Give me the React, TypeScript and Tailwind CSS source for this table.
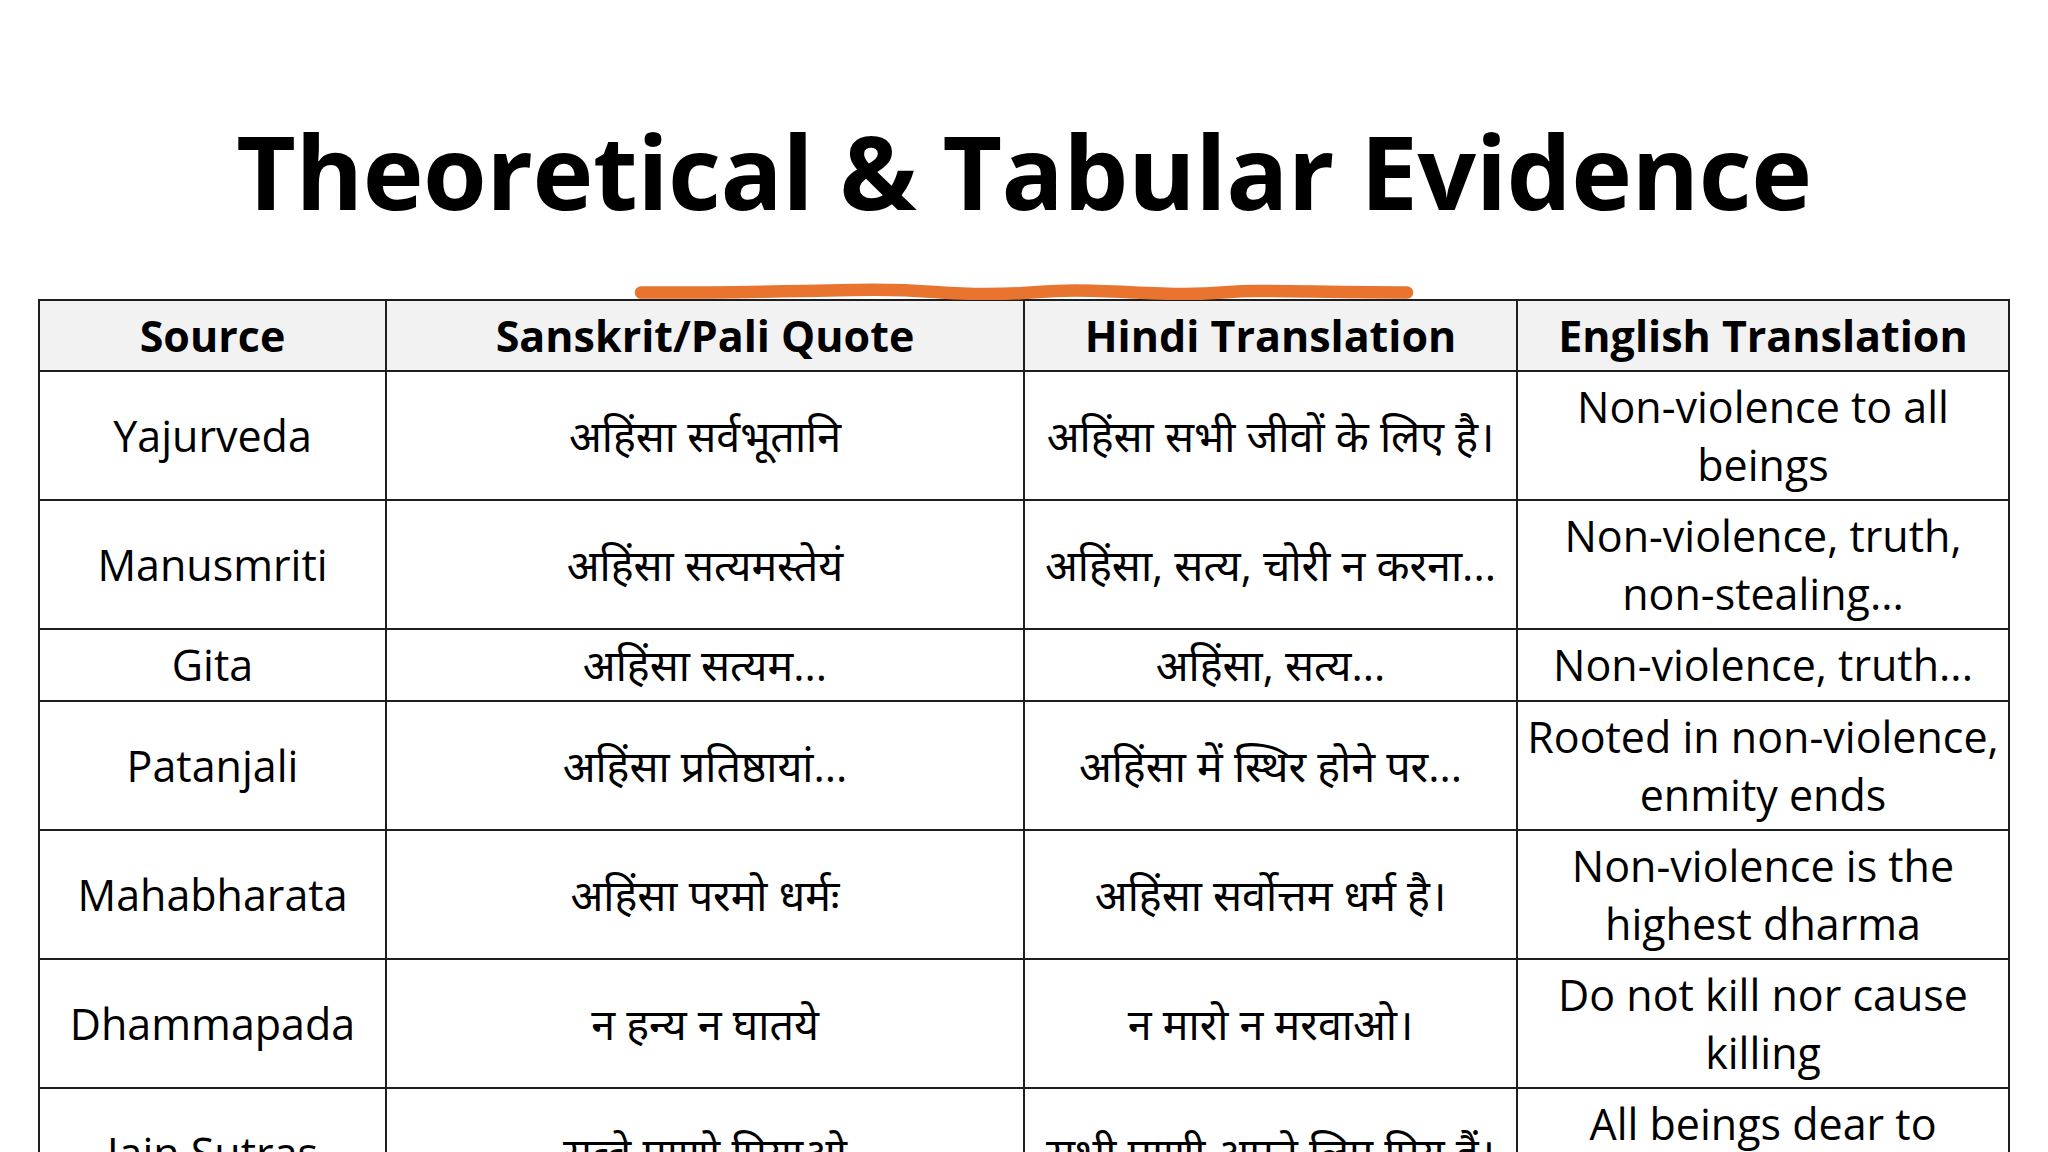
import React from "react";

type Row = {
  source: string;
  quote: string;
  hindi: string;
  english: string[];
  short?: boolean;
};

const rows: Row[] = [
  { source: "Yajurveda", quote: "अहिंसा सर्वभूतानि", hindi: "अहिंसा सभी जीवों के लिए है।", english: ["Non-violence to all", "beings"] },
  { source: "Manusmriti", quote: "अहिंसा सत्यमस्तेयं", hindi: "अहिंसा, सत्य, चोरी न करना...", english: ["Non-violence, truth,", "non-stealing..."] },
  { source: "Gita", quote: "अहिंसा सत्यम...", hindi: "अहिंसा, सत्य...", english: ["Non-violence, truth..."], short: true },
  { source: "Patanjali", quote: "अहिंसा प्रतिष्ठायां...", hindi: "अहिंसा में स्थिर होने पर...", english: ["Rooted in non-violence,", "enmity ends"] },
  { source: "Mahabharata", quote: "अहिंसा परमो धर्मः", hindi: "अहिंसा सर्वोत्तम धर्म है।", english: ["Non-violence is the", "highest dharma"] },
  { source: "Dhammapada", quote: "न हन्य न घातये", hindi: "न मारो न मरवाओ।", english: ["Do not kill nor cause", "killing"] },
  { source: "Jain Sutras", quote: "सव्वे पाणो पियाओ", hindi: "सभी प्राणी अपने लिए प्रिय हैं।", english: ["All beings dear to", "themselves"] },
];

const headers = ["Source", "Sanskrit/Pali Quote", "Hindi Translation", "English Translation"];

// hand-drawn orange underline under the title
function BrushLine() {
  return (
    <svg width="780" height="17" viewBox="0 0 780 17" className="block">
      <path
        d="M7 9.5 C 80 10, 150 8.5, 221 7 S 300 11, 352 11 S 402 7.5, 441 7.5 S 512 11, 551 11 S 592 8, 622 8 S 722 9.5, 773 9.5"
        fill="none"
        stroke="#e8742f"
        strokeWidth="12.5"
        strokeLinecap="round"
      />
    </svg>
  );
}

export default function App() {
  return (
    <div className="h-screen w-full overflow-hidden bg-white text-black font-['Open_Sans','Noto_Sans',sans-serif]">
      {/* Title */}
      <h1 className="pt-[107px] text-center text-[103px] font-bold leading-[127px] tracking-[-0.5px]">
        Theoretical &amp; Tabular Evidence
      </h1>

      <div className="mt-[49px] px-[38px]">
        <div className="-mb-[1px] flex justify-center">
          <BrushLine />
        </div>

        <table className="w-full table-fixed border-collapse border-2 border-[#1e1e1e] text-center">
          <colgroup>
            <col className="w-[347px]" />
            <col className="w-[638px]" />
            <col className="w-[493px]" />
            <col />
          </colgroup>
          <thead>
            <tr className="h-[71px] bg-[#f2f2f2]">
              {headers.map((h) => (
                <th key={h} className="border-2 border-[#1e1e1e] px-2 text-[43px] font-bold leading-[58px]">
                  {h}
                </th>
              ))}
            </tr>
          </thead>
          <tbody className="text-[43px] leading-[58px]">
            {rows.map((r) => (
              <tr key={r.source} className={r.short ? "h-[72px]" : "h-[129px]"}>
                <td className="border-2 border-[#1e1e1e] px-2">{r.source}</td>
                <td className="border-2 border-[#1e1e1e] px-2">{r.quote}</td>
                <td className="border-2 border-[#1e1e1e] px-1 whitespace-nowrap">{r.hindi}</td>
                <td className="border-2 border-[#1e1e1e] px-1">
                  {r.english.map((line) => (
                    <div key={line}>{line}</div>
                  ))}
                </td>
              </tr>
            ))}
          </tbody>
        </table>
      </div>
    </div>
  );
}
